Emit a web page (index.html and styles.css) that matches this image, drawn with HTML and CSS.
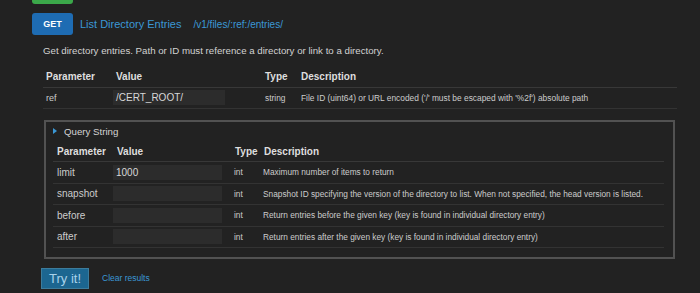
FILE: index.html
```html
<!DOCTYPE html>
<html>
<head>
<meta charset="utf-8">
<link rel="stylesheet" href="styles.css">
</head>
<body>
<div class="page">
  <div class="prev-btn"></div>
  <div class="endpoint">
    <span class="method">GET</span>
    <span class="title">List Directory Entries</span>
    <span class="path">/v1/files/:ref:/entries/</span>
  </div>
  <div class="body">
    <p class="summary">Get directory entries. Path or ID must reference a directory or link to a directory.</p>
    <table class="params main">
      <colgroup><col class="c1"><col class="c2"><col class="c3"><col></colgroup>
      <thead>
        <tr><th>Parameter</th><th>Value</th><th>Type</th><th>Description</th></tr>
      </thead>
      <tbody>
        <tr><td>ref</td><td class="val"><div class="input">/CERT_ROOT/</div></td><td class="type">string</td><td class="desc">File ID (uint64) or URL encoded ('/' must be escaped with '%2f') absolute path</td></tr>
      </tbody>
    </table>
    <div class="qs">
      <div class="qs-head"><span class="tri"></span><span>Query String</span></div>
      <table class="params inner">
        <colgroup><col class="c1"><col class="c2"><col class="c3"><col></colgroup>
        <thead>
          <tr><th>Parameter</th><th>Value</th><th>Type</th><th>Description</th></tr>
        </thead>
        <tbody>
          <tr><td>limit</td><td class="val"><div class="input">1000</div></td><td class="type">int</td><td class="desc">Maximum number of items to return</td></tr>
          <tr><td>snapshot</td><td class="val"><div class="input"></div></td><td class="type">int</td><td class="desc">Snapshot ID specifying the version of the directory to list. When not specified, the head version is listed.</td></tr>
          <tr><td>before</td><td class="val"><div class="input"></div></td><td class="type">int</td><td class="desc">Return entries before the given key (key is found in individual directory entry)</td></tr>
          <tr><td>after</td><td class="val"><div class="input"></div></td><td class="type">int</td><td class="desc">Return entries after the given key (key is found in individual directory entry)</td></tr>
        </tbody>
      </table>
    </div>
    <div class="actions">
      <span class="try">Try it!</span>
      <span class="clear">Clear results</span>
    </div>
  </div>
</div>
</body>
</html>
```
FILE: styles.css
```css
html, body {
  margin: 0;
  padding: 0;
  background: #222222;
  height: 100%;
}
body {
  font-family: "Liberation Sans", Arial, sans-serif;
  color: #cfcfcf;
  overflow: hidden;
}
.page {
  padding-left: 32px;
}
.prev-btn {
  width: 41px;
  height: 4px;
  background: #3ba84a;
  border-radius: 0 0 3px 3px;
}
.endpoint {
  display: flex;
  align-items: center;
  margin-top: 9px;
  height: 22px;
}
.method {
  width: 41px;
  height: 22px;
  background: #1e6cb3;
  border-radius: 3px;
  color: #ffffff;
  font-weight: bold;
  font-size: 9px;
  display: flex;
  align-items: center;
  justify-content: center;
}
.title {
  margin-left: 7px;
  font-size: 11px;
  color: #3b98d6;
}
.path {
  margin-left: 12px;
  font-size: 10px;
  color: #3b98d6;
}
.body {
  padding-left: 11px;
  width: 634px;
}
.summary {
  margin: 9px 0 0 0;
  height: 14px;
  line-height: 14px;
  font-size: 9.7px;
  color: #d2d2d2;
}
.params {
  border-collapse: collapse;
  table-layout: fixed;
  width: 100%;
}
.params th {
  text-align: left;
  font-weight: bold;
  font-size: 10px;
  color: #dedede;
  padding: 0 0 0 3px;
  border-bottom: 1px solid #383838;
}
.params td {
  font-size: 9px;
  color: #cccccc;
  padding: 0 0 0 3px;
  border-bottom: 1px solid #333333;
  white-space: nowrap;
  overflow: hidden;
}
.params td.val {
  padding-left: 0;
}
.params td.desc, .params td.type {
  font-size: 8.4px;
}
.main {
  margin-top: 8px;
}
.main .c1 { width: 70px; }
.main .c2 { width: 149px; }
.main .c3 { width: 36px; }
.main thead tr { height: 21px; }
.main tbody tr { height: 21px; }
.input {
  width: 109px;
  height: 15px;
  line-height: 15px;
  background: #2c2c2c;
  padding-left: 3px;
  font-size: 10px;
  color: #d8d8d8;
  box-sizing: border-box;
}
.main .input {
  width: 112px;
}
.qs {
  margin-top: 11px;
  margin-left: 1px;
  width: 631px;
  height: 139px;
  box-sizing: border-box;
  border: 2px solid #525252;
  padding: 0 9px 0 7px;
}
.qs-head {
  display: flex;
  align-items: center;
  height: 19px;
  font-size: 9.7px;
  color: #d4d4d4;
}
.tri {
  width: 0;
  height: 0;
  border-top: 3px solid transparent;
  border-bottom: 3px solid transparent;
  border-left: 4px solid #3b98d6;
  margin-left: 0;
  margin-right: 7px;
}
.inner .c1 { width: 60px; }
.inner .c2 { width: 118px; }
.inner .c3 { width: 29px; }
.inner thead tr { height: 21px; }
.inner thead th { vertical-align: bottom; padding-bottom: 4px; }
.inner tbody tr { height: 21.5px; }
.inner th { padding-left: 4px; }
.inner td { padding-left: 4px; font-size: 10px; }
.inner td.val { padding-left: 0; }
.inner td.type, .inner td.desc { padding-left: 3px; font-size: 8.3px; }
.actions {
  display: flex;
  align-items: center;
  margin-top: 9px;
  margin-left: -2px;
}
.try {
  width: 48px;
  height: 21px;
  box-sizing: border-box;
  border: 1px solid #3c7c9c;
  background: #1c6690;
  color: #a8d2ea;
  font-size: 13px;
  display: flex;
  align-items: center;
  justify-content: center;
}
.clear {
  margin-left: 13px;
  font-size: 8.5px;
  color: #3b98d6;
}
```
